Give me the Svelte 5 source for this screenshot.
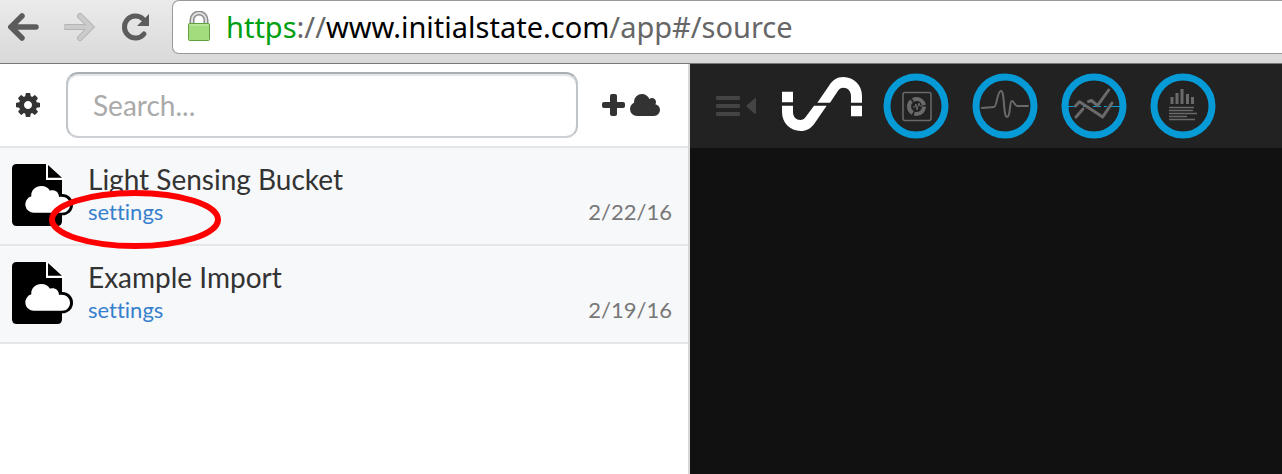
<script>
  const buckets = [
    { name: 'Light Sensing Bucket', date: '2/22/16', marked: true },
    { name: 'Example Import', date: '2/19/16', marked: false }
  ];
  const views = ['Tiles', 'Waves', 'Lines', 'Source'];
  let query = $state('');
</script>

<div class="page">
  <header class="browser">
    <nav class="nav" aria-label="Browser">
      <button aria-label="Back">
        <svg width="32" height="28" viewBox="0 0 32 28"><path d="M14 3 3 14l11 11M4 14h24" fill="none" stroke="#5c5c5c" stroke-width="5.500" stroke-linecap="round" stroke-linejoin="miter" /></svg>
      </button>
      <button aria-label="Forward">
        <svg width="32" height="28" viewBox="0 0 32 28"><path d="M16 3 27 14 16 25M26 14H2" fill="none" stroke="#b4b4b4" stroke-width="6" stroke-linecap="round" /><path d="M16 3 27 14 16 25M26 14H2" fill="none" stroke="#cbcbcb" stroke-width="4" stroke-linecap="round" /></svg>
      </button>
      <button aria-label="Reload">
        <svg width="32" height="28" viewBox="0 0 32 28"><path d="M24 21a11 11 0 1 1-1-15" fill="none" stroke="#5c5c5c" stroke-width="5" stroke-linecap="round" /><path d="M29 1v12H17z" fill="#5c5c5c" /></svg>
      </button>
    </nav>
    <div class="address">
      <svg class="lock" width="24" height="32" viewBox="0 0 24 32">
        <path d="M5 15V9a7 7 0 0 1 14 0v6" fill="none" stroke="#8b8b8b" stroke-width="5" />
        <path d="M5 15V9a7 7 0 0 1 14 0v6" fill="none" stroke="#dedede" stroke-width="2" />
        <rect x="1.5" y="12.5" width="21" height="17" rx="1" fill="#a3dc7c" stroke="#62a044" />
        <path d="M3 14h18" stroke="#c9efb0" />
      </svg>
      <div class="url" role="textbox" aria-label="Address" tabindex="0"><span class="secure">https</span>://<span class="host">www.initialstate.com</span>/app#/source</div>
    </div>
  </header>

  <div class="app">
    <aside class="sidebar">
      <div class="tools">
        <button aria-label="Preferences">
          <svg width="24" height="24" viewBox="128 128 1536 1536"><path fill="#333" d="M1152 896q0-106-75-181t-181-75-181 75-75 181 75 181 181 75 181-75 75-181zm512-109v222q0 12-8 23t-20 13l-185 28q-19 54-39 91 35 50 107 138 10 12 10 25t-9 23q-27 37-99 108t-94 71q-12 0-26-9l-138-108q-44 23-91 38-16 136-29 186-7 28-36 28h-222q-14 0-24.500-8.500t-11.500-21.500l-28-184q-49-16-90-37l-141 107q-10 9-25 9-14 0-25-11-126-114-165-168-7-10-7-23 0-12 8-23 15-21 51-66.500t54-70.500q-27-50-41-99l-183-27q-13-2-21-12.500t-8-23.500v-222q0-12 8-23t19-13l186-28q14-46 39-92-40-57-107-138-10-12-10-24 0-10 9-23 26-36 98.500-107.500t94.500-71.500q13 0 26 10l138 107q44-23 91-38 16-136 29-186 7-28 36-28h222q14 0 24.500 8.500t11.500 21.500l28 184q49 16 90 37l142-107q9-9 24-9 13 0 25 10 129 119 165 170 7 8 7 22 0 12-8 23-15 21-51 66.500t-54 70.500q26 50 41 98l183 28q13 2 21 12.500t8 23.500z" /></svg>
        </button>
        <input class="search" type="text" placeholder="Search..." aria-label="Search" bind:value={query} />
        <button class="add" aria-label="Add bucket">
          <svg width="23" height="22" viewBox="0 0 23 22" fill="#333"><rect x="8" width="7" height="22" rx="2" /><rect y="8" width="23" height="6" rx="2" /></svg>
          <svg width="30" height="22" viewBox="64 128 1920 1408"><path fill="#333" d="M1984 1152q0 159-112.500 271.500t-271.500 112.500h-1088q-185 0-316.500-131.500t-131.500-316.500q0-132 71-241.500t187-163.500q-2-28-2-43 0-212 150-362t362-150q158 0 286.500 88t187.500 230q70-62 166-62 106 0 181 75t75 181q0 75-41 138 129 30 213 134.500t84 239.500z" /></svg>
        </button>
      </div>
      <ul class="buckets">
        {#each buckets as bucket}
          <li>
            <svg class="file" width="61" height="62" viewBox="36 66 183 186">
              <path d="M50 66h88v47h48v125q0 14-14 14H50q-14 0-14-14V80q0-14 14-14z" />
              <path d="M138 66h6l53 48h-59z" fill="#fff" />
              <path d="M144 69l42 38h-42z" />
              <circle cx="187" cy="188" r="32" />
              <path fill="#fff" d="M102 212a25 25 0 0 1-8-49c-2-18 12-31 30-31 12 0 21 5 26 14 14-4 27 4 27 19 18-4 33 7 33 23 0 14-10 24-24 24z" />
            </svg>
            <div class="info">
              <span class="name">{bucket.name}</span>
              <div class="meta">
                <a href="#/settings">settings</a>
                <time>{bucket.date}</time>
              </div>
            </div>
            {#if bucket.marked}
              <svg class="mark" width="172" height="60" viewBox="0 0 172 60" aria-hidden="true"><ellipse cx="86" cy="29.500" rx="83" ry="26.500" fill="none" stroke="#f00" stroke-width="6" /></svg>
            {/if}
          </li>
        {/each}
      </ul>
    </aside>

    <main class="viewer">
      <div class="viewbar">
        <button aria-label="Collapse list">
          <svg width="40" height="20" viewBox="0 0 40 20" fill="#444"><rect width="24" height="4" rx="1" /><rect y="8" width="24" height="4" rx="1" /><rect y="16" width="24" height="4" rx="1" /><path d="M39 2q1 0 1 1v14q0 1-1 1L31 11q-1-1 0-2z" /></svg>
        </button>
        <a class="logo" href="#/" aria-label="Initial State">
          <svg width="80" height="54" viewBox="66 39 240 162" fill="#fff">
            <path d="M66 83h33v32H66zM273 125h33v32h-33z" />
            <path d="M66 125h33v19c0 15 10 24 22 24 7 0 12-3 16-9l25-34h38l-35 51c-11 16-24 25-43 25-32 0-56-25-56-57z" />
            <path d="M172 116l35-51c11-16 24-26 43-26 32 0 56 25 56 57v20h-33V96c0-15-10-25-23-25-7 0-12 3-16 9l-24 36z" />
          </svg>
        </a>
        <div class="views">
          {#each views as view, i}
            <button aria-label={view}>
              <svg width="66" height="66" viewBox="0 0 66 66" fill="none" stroke="#6a6a6a">
                {#if i === 2}<path d="M7 33.500h7M22 33.500h5M32 33.500h8M43 33.500h3M49 33.500h10" stroke="#069bd7" />{/if}
                <circle cx="33" cy="33" r="29" stroke="#069bd7" stroke-width="7" />
                {#if i === 0}
                  <rect x="20" y="19.500" width="28" height="28" rx="2" stroke-width="1.500" />
                  <circle cx="33.500" cy="33.500" r="7.500" stroke-width="4" stroke-dasharray="14 1.700" />
                  <path d="M30 34h2l1-3 1 6 2-7 1 3h2" stroke-width="1" />
                {:else if i === 1}
                  <path d="M10 35l12-1c3 0 3-16 7-16s2 26 6 26 2-16 5-16c2 0 3 5 5 5h11" stroke-width="2" stroke-linecap="round" />
                {:else if i === 2}
                  <path d="M15 44l7-8M14.500 33l4-4.300L41.700 44 51 30M27.500 28.500l3-1 6 5.200L47.700 17" stroke-width="3" stroke-linecap="round" stroke-linejoin="round" />
                {:else}
                  <path d="M22 24v7M27 20v11M32 16v15M37.500 21v10M42.500 24v7" stroke-width="3" />
                  <path d="M19 34.500h25M19 37.500h24M19 40.500h28M19 43.500h18M19 46.500h26" stroke-width="1.500" />
                {/if}
              </svg>
            </button>
          {/each}
        </div>
      </div>
    </main>
  </div>
</div>

<style>
  :global(body) { margin: 0; }
  .page {
    display: flex;
    flex-direction: column;
    min-height: 100vh;
    font-family: Lato, sans-serif;
    font-variant-ligatures: none;
    color: #333;
    overflow: hidden;
  }
  button {
    display: flex;
    padding: 0;
    border: 0;
    background: none;
    cursor: pointer;
  }
  svg { display: block; flex: none; }
  a { text-decoration: none; }

  .browser {
    display: flex;
    gap: 20px;
    padding-bottom: 9px;
    border-bottom: 1px solid #777;
    background: linear-gradient(#ebebeb, #d9d9d9);
  }
  .nav {
    display: flex;
    align-items: center;
    gap: 24px;
    padding-left: 8px;
  }
  .address {
    flex: 1;
    display: flex;
    align-items: center;
    gap: 15px;
    box-sizing: border-box;
    height: 54px;
    padding-left: 14px;
    border: 1px solid #999;
    border-right: 0;
    border-radius: 7px 0 0 7px;
    background: #fff;
  }
  .url {
    font: 29px/40px "Noto Sans", sans-serif;
    color: #666;
    white-space: nowrap;
  }
  .secure { color: #00a010; }
  .host { color: #000; }

  .app {
    flex: 1;
    display: grid;
    grid-template-columns: 690fr 592fr;
  }
  .sidebar {
    border-right: 2px solid #d5d7d9;
    background: #fff;
  }
  .tools {
    display: flex;
    align-items: center;
    gap: 24px;
    box-sizing: border-box;
    height: 84px;
    padding: 0 28px 0 16px;
    border-bottom: 2px solid #e5e6e8;
  }
  .search {
    flex: 1;
    min-width: 0;
    box-sizing: border-box;
    height: 66px;
    margin-left: 2px;
    padding: 0 25px;
    border: 2px solid #cdd1d5;
    border-color: #a9afb4 #c0c5ca #cdd1d5;
    border-radius: 12px;
    background: #fff;
    box-shadow: inset 0 2px 1px #e4e5e6;
    font: 28px/40px Lato, sans-serif;
    color: #333;
  }
  .search::placeholder { color: #aaa; opacity: 1; }
  .add { gap: 5px; }
  .buckets {
    margin: 0;
    padding: 0;
    list-style: none;
  }
  .buckets li {
    position: relative;
    display: flex;
    gap: 15px;
    padding: 16px 16px 14px 12px;
    border-bottom: 2px solid #e5e6e8;
    background: #f7f8fa;
  }
  .info { flex: 1; }
  .name {
    display: block;
    font-size: 28px;
    line-height: 30px;
  }
  .meta {
    display: flex;
    justify-content: space-between;
    font-size: 22px;
    line-height: 36px;
  }
  .meta a { color: #3680cd; }
  .meta time { color: #777; }
  .mark {
    position: absolute;
    left: 49px;
    top: 42px;
    z-index: 1;
    pointer-events: none;
  }

  .viewer { background: #111; }
  .viewbar {
    display: flex;
    align-items: center;
    box-sizing: border-box;
    height: 84px;
    padding-left: 26px;
    background: #222;
  }
  .logo { margin: 0 21px 4px 26px; }
  .views { display: flex; gap: 23px; }
</style>
